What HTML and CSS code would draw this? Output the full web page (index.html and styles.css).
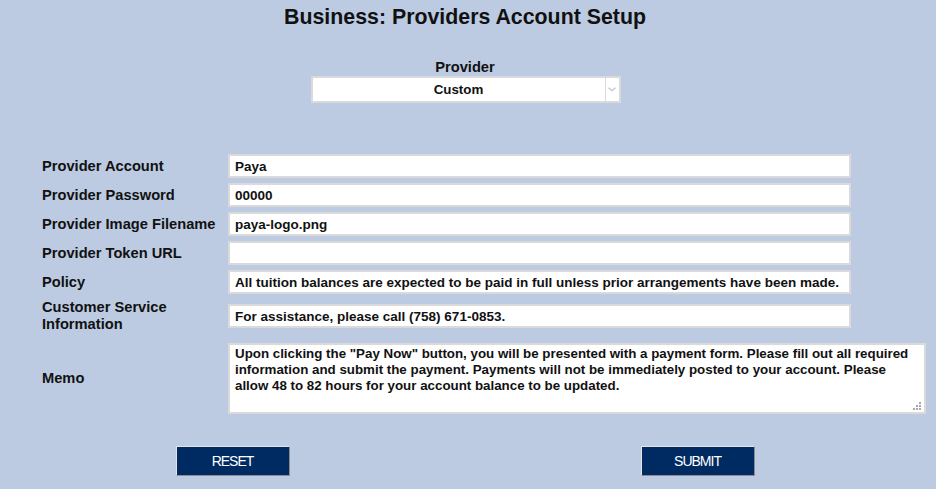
FILE: index.html
```html
<!DOCTYPE html>
<html lang="en">
<head>
<meta charset="utf-8">
<title>Business: Providers Account Setup</title>
<link rel="stylesheet" href="styles.css">
</head>
<body>
<div class="page">
  <h1 class="title">Business: Providers Account Setup</h1>

  <div class="provider-pick">
    <label class="pick-label" for="provider">Provider</label>
    <div class="select-box">
      <select id="provider" class="select">
        <option>Custom</option>
      </select>
      <span class="select-arrow">
        <svg width="8" height="5" viewBox="0 0 8 5"><path d="M0.5 0.8 L4 3.8 L7.5 0.8" fill="none" stroke="#c4c4c4" stroke-width="1.2"/></svg>
      </span>
    </div>
  </div>

  <form class="form">
    <div class="row">
      <label class="label">Provider Account</label>
      <input class="field" type="text" value="Paya">
    </div>
    <div class="row">
      <label class="label">Provider Password</label>
      <input class="field" type="text" value="00000">
    </div>
    <div class="row">
      <label class="label">Provider Image Filename</label>
      <input class="field" type="text" value="paya-logo.png">
    </div>
    <div class="row">
      <label class="label">Provider Token URL</label>
      <input class="field" type="text" value="">
    </div>
    <div class="row">
      <label class="label">Policy</label>
      <input class="field" type="text" value="All tuition balances are expected to be paid in full unless prior arrangements have been made.">
    </div>
    <div class="row">
      <label class="label">Customer Service Information</label>
      <input class="field" type="text" value="For assistance, please call (758) 671-0853.">
    </div>
    <div class="row row-memo">
      <label class="label">Memo</label>
      <div class="memo-wrap">
        <textarea class="memo">Upon clicking the "Pay Now" button, you will be presented with a payment form. Please fill out all required information and submit the payment. Payments will not be immediately posted to your account. Please allow 48 to 82 hours for your account balance to be updated.</textarea>
        <svg class="grip" width="8" height="8" viewBox="0 0 8 8">
          <rect x="6" y="0" width="2" height="2" fill="#a8a8a8"/>
          <rect x="3" y="3" width="2" height="2" fill="#a8a8a8"/>
          <rect x="6" y="3" width="2" height="2" fill="#a8a8a8"/>
          <rect x="0" y="6" width="2" height="2" fill="#a8a8a8"/>
          <rect x="3" y="6" width="2" height="2" fill="#a8a8a8"/>
          <rect x="6" y="6" width="2" height="2" fill="#a8a8a8"/>
        </svg>
      </div>
    </div>

    <div class="actions">
      <div class="action-cell"><button type="reset" class="btn">RESET</button></div>
      <div class="action-cell"><button type="button" class="btn">SUBMIT</button></div>
    </div>
  </form>
</div>
</body>
</html>
```

FILE: styles.css
```css
html, body {
  margin: 0;
  padding: 0;
  background: #bccbe1;
}

body {
  font-family: "Liberation Sans", Arial, sans-serif;
  color: #111;
}

.page {
  width: 930px;
  display: flex;
  flex-direction: column;
}

.title {
  margin: 0;
  padding-top: 5px;
  font-size: 21.33px;
  line-height: 24px;
  font-weight: bold;
  text-align: center;
  color: #111;
}

.provider-pick {
  margin-top: 30px;
  display: flex;
  flex-direction: column;
  align-items: center;
}

.pick-label {
  font-size: 14.67px;
  font-weight: bold;
  line-height: 17px;
}

.select-box {
  width: 306px;
  height: 23px;
  margin-left: 1px;
  display: flex;
  background: #fff;
  border: 2px solid #dadada;
}

.select {
  flex: 1;
  min-width: 0;
  appearance: none;
  -webkit-appearance: none;
  border: 0;
  outline: none;
  background: #fff;
  font-family: "Liberation Sans", Arial, sans-serif;
  font-size: 13.33px;
  font-weight: bold;
  color: #111;
  text-align: center;
  text-align-last: center;
  padding: 0;
  margin: 0;
}

.select-arrow {
  width: 13px;
  border-left: 1px solid #dadada;
  display: flex;
  align-items: center;
  justify-content: center;
}

.form {
  margin: 51px 0 0 0;
  padding-left: 42px;
  display: flex;
  flex-direction: column;
  gap: 5px;
}

.row {
  display: grid;
  grid-template-columns: 186px auto;
  align-items: center;
  min-height: 24px;
}

.label {
  font-size: 14.67px;
  font-weight: bold;
  line-height: 17px;
  padding-right: 12px;
}

.field {
  box-sizing: border-box;
  width: 623px;
  height: 24px;
  margin: 0;
  padding: 0 5px;
  border: 2px solid #dadada;
  background: #fff;
  font-family: "Liberation Sans", Arial, sans-serif;
  font-size: 13.5px;
  font-weight: bold;
  color: #111;
  outline: none;
}

.row-memo {
  margin-top: 5px;
}

.memo-wrap {
  position: relative;
  width: 698px;
  height: 71px;
}

.memo {
  display: block;
  box-sizing: border-box;
  width: 698px;
  height: 71px;
  margin: 0;
  padding: 1px 5px;
  border: 2px solid #dadada;
  background: #fff;
  font-family: "Liberation Sans", Arial, sans-serif;
  font-size: 13.33px;
  font-weight: bold;
  line-height: 16px;
  color: #111;
  resize: none;
  overflow: hidden;
  outline: none;
}

.grip {
  position: absolute;
  right: 5px;
  bottom: 4px;
}

.actions {
  margin: 27px 0 0 -42px;
  display: flex;
}

.action-cell {
  flex: 1;
  display: flex;
  justify-content: center;
}

.btn {
  box-sizing: border-box;
  width: 114px;
  height: 30px;
  margin: 0;
  padding: 0;
  background: #002a62;
  color: #fff;
  border: 1px solid;
  border-color: #e4e4e4 #8c8c8c #8c8c8c #e4e4e4;
  font-family: "Liberation Sans", Arial, sans-serif;
  font-size: 14px;
  letter-spacing: -1px;
  cursor: pointer;
}
```
